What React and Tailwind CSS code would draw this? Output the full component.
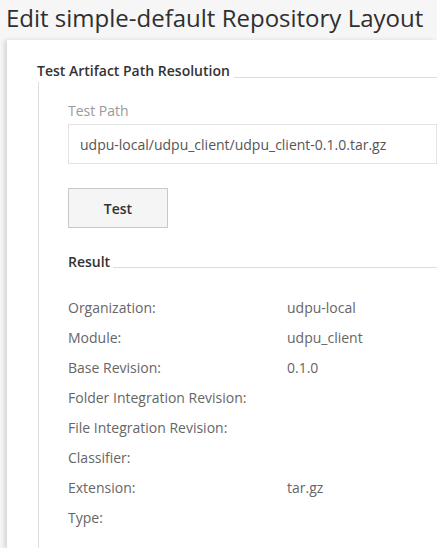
const rows = [
  ['Organization:', 'udpu-local'],
  ['Module:', 'udpu_client'],
  ['Base Revision:', '0.1.0'],
  ['Folder Integration Revision:', ''],
  ['File Integration Revision:', ''],
  ['Classifier:', ''],
  ['Extension:', 'tar.gz'],
  ['Type:', ''],
];

export default function App() {
  return (
    <div className="h-[548px] overflow-hidden bg-[#f6f6f6] font-['Open_Sans',sans-serif]">
      <h1 className="pl-[6px] pt-[1px] h-[40px] text-[24px] leading-[34px] text-[#2f2f2f]">
        Edit simple-default Repository Layout
      </h1>
      <div className="ml-[7px] h-[508px] bg-white shadow-[-3px_0_4px_rgba(0,0,0,0.12)] pl-[30px] pt-[22px]">
        <div className="flex items-end">
          <span className="text-[14px] font-semibold text-[#333] leading-[18px] pr-[4px]">
            Test Artifact Path Resolution
          </span>
          <div className="flex-1 border-b border-[#dcdcdc] mb-[2px]" />
        </div>
        <div className="ml-[1px] mt-[2px] border-l border-[#dcdcdc] h-[500px] pl-[29px] pt-[19px]">
          <div className="text-[14px] text-[#9a9a9a] leading-[20px]">Test Path</div>
          <div className="mt-[3px] h-[40px] border border-[#e3e3e3] flex items-center pl-[11px] text-[14px] text-[#555] whitespace-nowrap">
            udpu-local/udpu_client/udpu_client-0.1.0.tar.gz
          </div>
          <button className="mt-[24px] w-[100px] h-[40px] bg-[#f5f5f5] border border-[#c8c8c8] text-[14px] font-semibold text-[#333]">
            Test
          </button>
          <div className="mt-[25px] flex items-end">
            <span className="text-[14px] font-semibold text-[#333] leading-[18px] pr-[3px]">Result</span>
            <div className="flex-1 border-b border-[#dcdcdc] mb-[3px]" />
          </div>
          <div className="mt-[21px]">
            {rows.map(([k, v]) => (
              <div key={k} className="flex h-[30px] items-center text-[14px] text-[#666]">
                <span className="w-[219px]">{k}</span>
                <span>{v}</span>
              </div>
            ))}
          </div>
        </div>
      </div>
    </div>
  );
}
